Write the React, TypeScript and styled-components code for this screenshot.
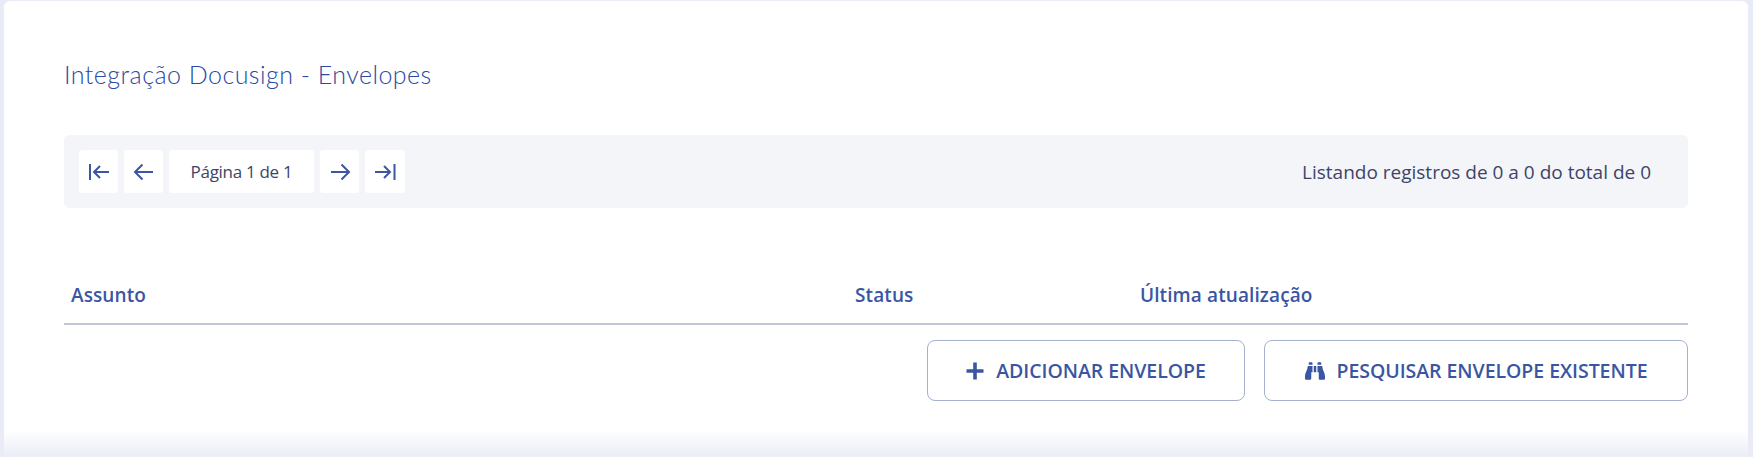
import React from "react";
import styled, { createGlobalStyle } from "styled-components";
import { FaBinoculars } from "react-icons/fa";

const Global = createGlobalStyle`
  html, body { margin: 0; padding: 0; background: #e9ecf6; }
  #root { width: 1753px; height: 457px; overflow: hidden; }
  * { box-sizing: border-box; }
`;

const Page = styled.div`
  width: 1753px;
  height: 457px;
  padding: 1px 5px 0 4px;
  background: #e9ecf6;
`;

const Card = styled.section`
  height: 456px;
  padding: 0 60px;
  background: linear-gradient(to bottom, #ffffff 0, #ffffff 429px, #edeff7 452px);
  border-radius: 6px 6px 0 0;
  display: flex;
  flex-direction: column;
  font-family: "Open Sans", "Noto Sans", sans-serif;
`;

const Title = styled.h1`
  margin: 60px 0 0;
  height: 28px;
  font-family: Lato, "Open Sans", sans-serif;
  font-weight: 300;
  font-size: 25px;
  line-height: 27px;
  letter-spacing: 0.47px;
  color: #2a4aa2;
`;

const Toolbar = styled.div`
  margin-top: 46px;
  height: 73px;
  padding: 15px;
  display: flex;
  align-items: flex-start;
  justify-content: space-between;
  background: #f4f5f9;
  border-radius: 5px;
`;

const Pager = styled.div`
  display: flex;
  gap: 6px;
`;

const PageButton = styled.button<{ $w?: number }>`
  width: ${(p) => p.$w ?? 39}px;
  height: 43px;
  padding: 0;
  border: 0;
  border-radius: 3px;
  background: #ffffff;
  color: #3b57a3;
  display: flex;
  align-items: center;
  justify-content: center;
`;

const PageLabel = styled.div`
  width: 145px;
  height: 43px;
  border-radius: 3px;
  background: #ffffff;
  display: flex;
  align-items: center;
  justify-content: center;
  font-size: 17px;
  letter-spacing: -0.3px;
  color: #3d4468;
`;

const Listing = styled.div`
  height: 43px;
  padding-right: 22px;
  display: flex;
  align-items: center;
  font-size: 19px;
  color: #3d4468;
`;

const TableHead = styled.div`
  margin-top: 73px;
  height: 44px;
  padding: 0 0 14px 7px;
  display: grid;
  grid-template-columns: 784px 285px 1fr;
  align-items: center;
  border-bottom: 2px solid #c0c6da;
  font-size: 19px;
  font-weight: 600;
  letter-spacing: 0.1px;
  color: #3a56a3;
`;

const Actions = styled.div`
  margin-top: 15px;
  display: flex;
  justify-content: flex-end;
  gap: 19px;
`;

const ActionButton = styled.button<{ $w: number }>`
  width: ${(p) => p.$w}px;
  height: 61px;
  padding: 0;
  border: 1px solid #a4b0cd;
  border-radius: 8px;
  background: #ffffff;
  color: #3a56a3;
  display: flex;
  align-items: center;
  justify-content: center;
  gap: 12px;
  font-family: "Open Sans", "Noto Sans", sans-serif;
  font-size: 19.5px;
  font-weight: 600;
  letter-spacing: -0.05px;
`;

const Arrow = ({ kind }: { kind: "first" | "prev" | "next" | "last" }) => {
  const paths = {
    first: "M4 5v16M23 13H8M14 7l-6 6 6 6",
    prev: "M22 13H4M11.500 5.500 4 13l7.500 7.500",
    next: "M4 13h18M14.500 5.500 22 13l-7.500 7.500",
    last: "M22.500 5v16M3 13h15M12 7l6 6-6 6",
  };
  return (
    <svg width="26" height="26" viewBox="0 0 26 26" fill="none" stroke="currentColor" strokeWidth="2">
      <path d={paths[kind]} />
    </svg>
  );
};

const Plus = () => (
  <svg width="18" height="18" viewBox="0 0 18 18" fill="currentColor">
    <path d="M7.200 0.500h3.600v6.700h6.700v3.600h-6.700v6.700H7.200v-6.700H0.500V7.200h6.700z" />
  </svg>
);

export default function App() {
  return (
    <Page>
      <Global />
      <Card>
        <Title>Integração Docusign - Envelopes</Title>
        <Toolbar>
          <Pager>
            <PageButton aria-label="Primeira"><Arrow kind="first" /></PageButton>
            <PageButton aria-label="Anterior"><Arrow kind="prev" /></PageButton>
            <PageLabel>Página 1 de 1</PageLabel>
            <PageButton aria-label="Próxima"><Arrow kind="next" /></PageButton>
            <PageButton $w={40} aria-label="Última"><Arrow kind="last" /></PageButton>
          </Pager>
          <Listing>Listando registros de 0 a 0 do total de 0</Listing>
        </Toolbar>
        <TableHead>
          <span>Assunto</span>
          <span>Status</span>
          <span>Última atualização</span>
        </TableHead>
        <Actions>
          <ActionButton $w={318}><Plus />ADICIONAR ENVELOPE</ActionButton>
          <ActionButton $w={424}><FaBinoculars size={20} />PESQUISAR ENVELOPE EXISTENTE</ActionButton>
        </Actions>
      </Card>
    </Page>
  );
}
